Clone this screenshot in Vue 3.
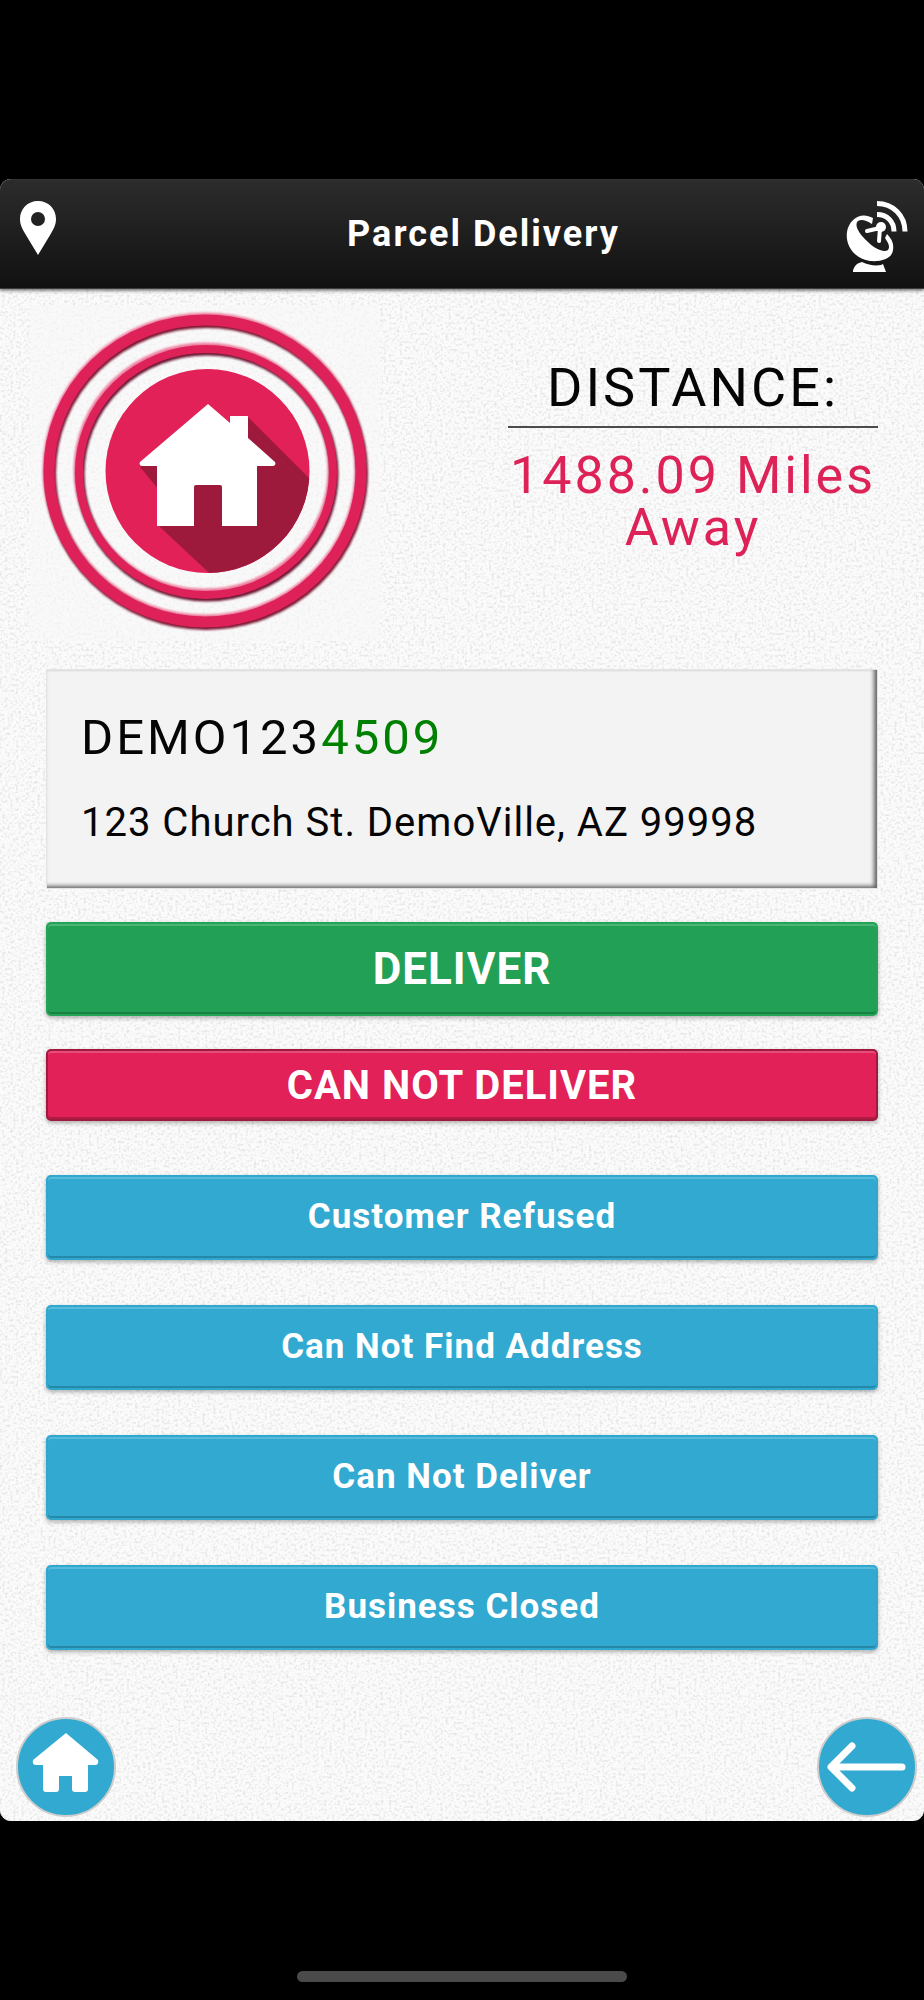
<script setup>
const reasons = ['Customer Refused', 'Can Not Find Address', 'Can Not Deliver', 'Business Closed']
</script>

<template>
  <div class="device">
    <div class="screen">
      <svg class="grain" aria-hidden="true">
        <filter id="grain" x="0" y="0" width="100%" height="100%">
          <feTurbulence type="fractalNoise" baseFrequency="0.37" numOctaves="2" seed="11" />
          <feColorMatrix values="0 0 0 0 0.78  0 0 0 0 0.78  0 0 0 0 0.78  3 0 0 0 -1.4" />
        </filter>
        <rect width="100%" height="100%" filter="url(#grain)" />
      </svg>

      <header class="bar">
        <svg class="pin" viewBox="0 0 38 54" aria-hidden="true">
          <path fill="#fff" fill-rule="evenodd" d="M19 0C8.500 0 1 8 1 18c0 6 2.500 10 5 14.500L19 54l13-21.500C34.500 28 37 24 37 18 37 8 29.500 0 19 0zm0 11a7 7 0 1 1 0 14 7 7 0 0 1 0-14z" />
        </svg>
        <h1>Parcel Delivery</h1>
        <svg class="dish" viewBox="0 0 62 72" aria-hidden="true">
          <path fill="#fff" d="M13 62l3-1c6 3 13 4 19 3l2-1 3 8H7c0-4 3-8 6-9z" />
          <path fill="#fff" fill-rule="evenodd" d="M27 17C15 10 3 18 1 31c-2 14 8 27 23 29 13 1 22-3 23-11 1-6-1-11-6-16l-2 4c4 6 5 9 3 12-4 3-13-1-20-8C12 32 8 24 12 20c3-2 8-1 14 3z" />
          <path fill="none" stroke="#fff" stroke-width="4" stroke-linecap="round" stroke-linejoin="round" d="M21 30l13-3-1 13M32 28l4-3" />
          <circle cx="35" cy="26" r="5" fill="#fff" />
          <path fill="none" stroke="#fff" stroke-width="5" d="M31 13.500c10 0 17 7 17 17M31 2.500c16 0 28 12 28 28" />
        </svg>
      </header>

      <main>
        <section class="summary">
          <svg class="emblem" viewBox="0 -2 350 336" aria-hidden="true">
            <defs>
              <clipPath id="disc"><circle cx="177.500" cy="164" r="102" /></clipPath>
              <filter id="soft"><feGaussianBlur stdDeviation="1" /></filter>
            </defs>
            <g fill="none">
              <g filter="url(#soft)">
                <ellipse cx="175" cy="163" rx="156" ry="151" stroke="#ef7fa0" stroke-width="13" />
                <ellipse cx="176" cy="166" rx="156" ry="151" stroke="#7c1233" stroke-width="12" />
                <ellipse cx="175" cy="163" rx="127" ry="123" stroke="#ef7fa0" stroke-width="9" />
                <ellipse cx="177" cy="167" rx="127" ry="123" stroke="#6a1230" stroke-width="9" />
              </g>
              <ellipse cx="175" cy="164" rx="156" ry="151" stroke="#df2159" stroke-width="11" />
              <ellipse cx="176" cy="165" rx="127" ry="123" stroke="#df2159" stroke-width="8" />
            </g>
            <circle cx="177.500" cy="164" r="102" fill="#e12158" />
            <path clip-path="url(#disc)" fill="#9d1a3d" d="M217 109L300 192V290H205L130 220V184L110 160z" />
            <path fill="#fff" d="M178 97l22 19v-7h18v22l27 24c1 2 0 4-2 4h-16v60h-35v-39q0-2-2-2h-24q-2 0-2 2v39h-37v-60h-15c-2 0-3-2-2-4z" />
          </svg>
          <div class="distance">
            <h2>DISTANCE:</h2>
            <p>1488.09 Miles Away</p>
          </div>
        </section>

        <section class="parcel">
          <p class="code">DEMO123<span>4509</span></p>
          <p class="address">123 Church St. DemoVille, AZ 99998</p>
        </section>

        <button type="button" class="btn deliver">DELIVER</button>
        <button type="button" class="btn refuse">CAN NOT DELIVER</button>
        <div class="reasons">
          <button v-for="reason in reasons" :key="reason" type="button" class="btn reason">{{ reason }}</button>
        </div>
      </main>

      <nav>
        <button type="button" class="round" aria-label="Home">
          <svg viewBox="0 0 96 96" aria-hidden="true">
            <path fill="#fff" d="M48 14L80 41q1 5-3 5h-7v24q0 3-3 3H57q-3 0-3-3V57H41v13q0 3-3 3H28q-3 0-3-3V46h-7q-4 0-3-5z" />
          </svg>
        </button>
        <button type="button" class="round" aria-label="Back">
          <svg viewBox="0 0 96 96" aria-hidden="true">
            <path fill="none" stroke="#fff" stroke-width="7" stroke-linecap="round" stroke-linejoin="round" d="M33 27L12 48l21 21M14 48h69" />
          </svg>
        </button>
      </nav>
    </div>
    <div class="indicator"></div>
  </div>
</template>

<style>
body {
  margin: 0;
  background: #000;
}
</style>

<style scoped>
.device {
  box-sizing: border-box;
  min-height: 100vh;
  padding-top: 179px;
  display: flex;
  flex-direction: column;
  align-items: center;
  background: #000;
  font-family: Roboto, "Liberation Sans", sans-serif;
}
.screen {
  position: relative;
  width: 100%;
  flex: 1;
  display: flex;
  flex-direction: column;
  border-radius: 11px;
  overflow: hidden;
  background: #fbfbfb;
}
.grain {
  position: absolute;
  inset: 0;
  width: 100%;
  height: 100%;
}
.bar {
  position: relative;
  box-sizing: border-box;
  min-height: 110px;
  padding: 21px 15px 12px 18px;
  display: grid;
  grid-template-columns: 104px 1fr 64px;
  align-items: start;
  background: linear-gradient(#2c2c2c, #111);
  border-top: 1px solid #343434;
  border-bottom: 1px solid #3c3c3c;
  box-shadow: 0 1px 4px rgba(0, 0, 0, 0.7);
}
.pin {
  width: 40px;
  height: 54px;
}
.dish {
  width: 64px;
  height: 72px;
}
h1 {
  margin: 11px 0 0;
  color: #fff;
  font-size: 36px;
  line-height: 44px;
  font-weight: 700;
  letter-spacing: 2px;
  text-align: center;
}
main {
  position: relative;
  padding: 16px 46px 0;
  display: flex;
  flex-direction: column;
}
.summary {
  display: flex;
  justify-content: space-between;
  margin-left: -16px;
}
.emblem {
  width: 350px;
  height: 336px;
  background: rgba(249, 249, 249, 0.6);
}
.distance {
  width: 370px;
  padding-top: 51px;
  text-align: center;
}
h2 {
  margin: 0;
  padding-bottom: 6px;
  border-bottom: 2px solid #4c4c4c;
  color: #050505;
  font-size: 54px;
  line-height: 64px;
  font-weight: 400;
  letter-spacing: 3px;
}
.distance p {
  margin: 22px -10px 0;
  color: #dd2257;
  font-size: 52px;
  line-height: 52px;
  letter-spacing: 3px;
}
.parcel {
  margin-top: 28px;
  padding: 38px 34px 41px;
  border: 1px solid #e4e4e4;
  background: #f3f3f3;
  box-shadow: inset -3px -2px 4px rgba(0, 0, 0, 0.6);
  color: #050505;
}
.parcel p {
  margin: 0;
}
.code {
  font-size: 49px;
  line-height: 60px;
  letter-spacing: 3px;
}
.code span {
  color: #008000;
}
.parcel .address {
  margin-top: 31px;
  font-size: 40px;
  line-height: 48px;
  letter-spacing: 1px;
}
.btn {
  width: 100%;
  margin: 0;
  padding: 0;
  border: 2px solid;
  border-radius: 5px;
  box-shadow: inset 0 2px rgba(255, 255, 255, 0.2), inset 0 -2px rgba(0, 0, 0, 0.2), 0 2px 4px rgba(0, 0, 0, 0.3);
  color: #fff;
  font-family: inherit;
  font-weight: 700;
  letter-spacing: 1px;
}
.deliver {
  margin-top: 33px;
  height: 94px;
  border-color: #22a457;
  background: #22a156;
  font-size: 44px;
}
.refuse {
  margin-top: 33px;
  height: 72px;
  border-color: #a01a40;
  background: #e12158;
  font-size: 40px;
}
.reasons {
  margin-top: 54px;
  display: grid;
  gap: 45px;
}
.reason {
  height: 85px;
  padding-bottom: 2px;
  border-color: #2fa8cf;
  background: #31a9d0;
  font-size: 35px;
}
nav {
  position: relative;
  margin-top: auto;
  padding: 0 7px 4px 16px;
  display: flex;
  justify-content: space-between;
}
.round {
  width: 100px;
  height: 100px;
  padding: 0;
  border: 2px solid #ccc;
  border-radius: 50%;
  background: #31a9d0;
}
.round svg {
  display: block;
  width: 96px;
  height: 96px;
}
.indicator {
  width: 330px;
  max-width: 60%;
  height: 11px;
  margin: 150px 0 18px;
  border-radius: 6px;
  background: #4a4a4a;
}
</style>
